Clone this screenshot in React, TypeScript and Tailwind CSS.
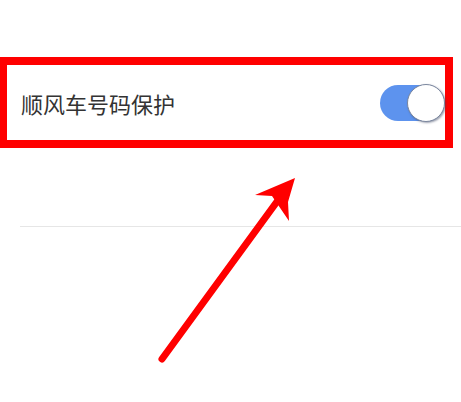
export default function App() {
  return (
    <div
      className="relative w-[461px] h-[402px] overflow-hidden bg-white"
      style={{ fontFamily: '"Noto Sans CJK SC", "Noto Sans", sans-serif' }}
    >
      <div className="h-[57px]" />

      {/* highlighted setting row */}
      <div className="w-[453px] h-[91px] border-[8px] border-l-[7px] border-[#ff0000] flex items-center justify-between pl-[14px] pr-[1px]">
        <span className="text-[22px] leading-none text-[#333333]">顺风车号码保护</span>
        <div className="relative w-[64px] h-[36px] rounded-full bg-[#5d93ee]">
          <div className="absolute right-[-1px] top-[-1px] w-[38px] h-[38px] rounded-full bg-white border border-[#7b879e] shadow-[1px_1px_2px_rgba(60,70,100,0.5)]" />
        </div>
      </div>

      <div className="h-[78px]" />
      <div className="ml-[20px] h-px bg-[#e6e6e6]" />

      {/* annotation arrow */}
      <svg className="absolute left-0 top-0" width="461" height="402" viewBox="0 0 461 402">
        <line x1="162" y1="359" x2="284" y2="192" stroke="#ff0000" strokeWidth="7" strokeLinecap="round" />
        <polygon points="295,178 255,195 272,196 289,221 288,202" fill="#ff0000" />
      </svg>
    </div>
  );
}
